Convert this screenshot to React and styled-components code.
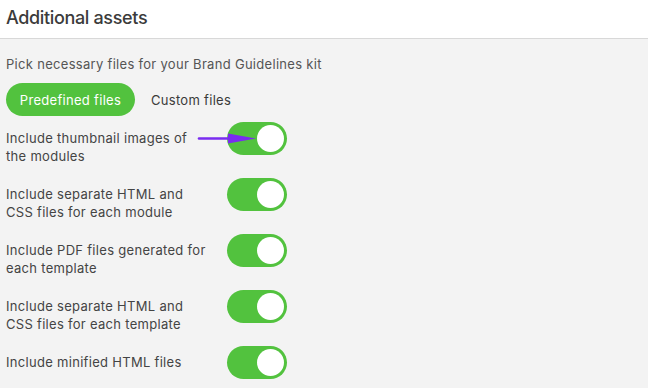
import React, { useState } from "react";
import styled, { createGlobalStyle } from "styled-components";

const Global = createGlobalStyle`
  html, body { margin: 0; padding: 0; background: #f3f3f3; }
  body { font-family: Inter, "Noto Sans", "Liberation Sans", sans-serif; -webkit-font-smoothing: antialiased; }
  * { box-sizing: border-box; }
`;

const Page = styled.div`
  width: 648px;
  height: 388px;
  overflow: hidden;
  background: #f3f3f3;
`;

const Header = styled.header`
  height: 39px;
  background: #ffffff;
  border-bottom: 1px solid #d8d8d8;
  display: flex;
  align-items: center;
  padding: 0 6px 4px;
`;

const Title = styled.h1`
  margin: 0;
  font-size: 18px;
  font-weight: 500;
  color: #3b3b3b;
  letter-spacing: -0.35px;
`;

const Body = styled.div`
  padding: 17px 6px 0;
  display: flex;
  flex-direction: column;
`;

const Subtitle = styled.p`
  margin: 0;
  font-size: 13px;
  line-height: 16px;
  letter-spacing: 0.3px;
  color: #555;
`;

const Tabs = styled.div`
  display: flex;
  align-items: center;
  gap: 16px;
  margin-top: 11px;
`;

const Tab = styled.button`
  border: none;
  font-family: inherit;
  font-size: 13px;
  letter-spacing: 0.3px;
  white-space: nowrap;
  height: 33px;
  border-radius: 17px;
  padding: 0;
  width: ${(p) => (p.$active ? "129px" : "auto")};
  background: ${(p) => (p.$active ? "#52c23e" : "transparent")};
  color: ${(p) => (p.$active ? "#ffffff" : "#3a3a3a")};
  cursor: pointer;
`;

const List = styled.div`
  margin-top: 6px;
  display: flex;
  flex-direction: column;
`;

const Row = styled.div`
  position: relative;
  display: flex;
  align-items: flex-start;
  height: 56px;
`;

const Label = styled.div`
  width: 202px;
  margin-right: 19px;
  margin-top: 8px;
  font-size: 13px;
  line-height: 17.5px;
  letter-spacing: 0.3px;
  color: #444;
`;

const Toggle = styled.button`
  position: relative;
  width: 60px;
  height: 33px;
  border: none;
  padding: 0;
  border-radius: 17px;
  background: ${(p) => (p.$on ? "#52c23e" : "#c9c9c9")};
  cursor: pointer;
`;

const Knob = styled.span`
  position: absolute;
  top: 3px;
  left: ${(p) => (p.$on ? "30px" : "3px")};
  width: 27px;
  height: 27px;
  border-radius: 50%;
  background: #ffffff;
`;

const Arrow = styled.svg`
  position: absolute;
  left: 186px;
  top: 8px;
  pointer-events: none;
`;

const items = [
  "Include thumbnail images of the modules",
  "Include separate HTML and CSS files for each module",
  "Include PDF files generated for each template",
  "Include separate HTML and CSS files for each template",
  "Include minified HTML files",
];

export default function App() {
  const [on, setOn] = useState(items.map(() => true));
  const [tab, setTab] = useState(0);
  return (
    <Page>
      <Global />
      <Header>
        <Title>Additional assets</Title>
      </Header>
      <Body>
        <Subtitle>Pick necessary files for your Brand Guidelines kit</Subtitle>
        <Tabs>
          <Tab $active={tab === 0} onClick={() => setTab(0)}>Predefined files</Tab>
          <Tab $active={tab === 1} onClick={() => setTab(1)}>Custom files</Tab>
        </Tabs>
        <List>
          {items.map((t, i) => (
            <Row key={t}>
              <Label>{t}</Label>
              <Toggle
                $on={on[i]}
                onClick={() => setOn(on.map((v, j) => (j === i ? !v : v)))}
              >
                <Knob $on={on[i]} />
              </Toggle>
              {i === 0 && (
                <Arrow width="66" height="18" viewBox="0 0 66 18">
                  <line x1="7" y1="8.5" x2="38" y2="8.5" stroke="#7a2cf0" strokeWidth="2.6" strokeLinecap="round" />
                  <polygon points="36,3.5 64,8.5 36,13.5" fill="#7a2cf0" />
                </Arrow>
              )}
            </Row>
          ))}
        </List>
      </Body>
    </Page>
  );
}
